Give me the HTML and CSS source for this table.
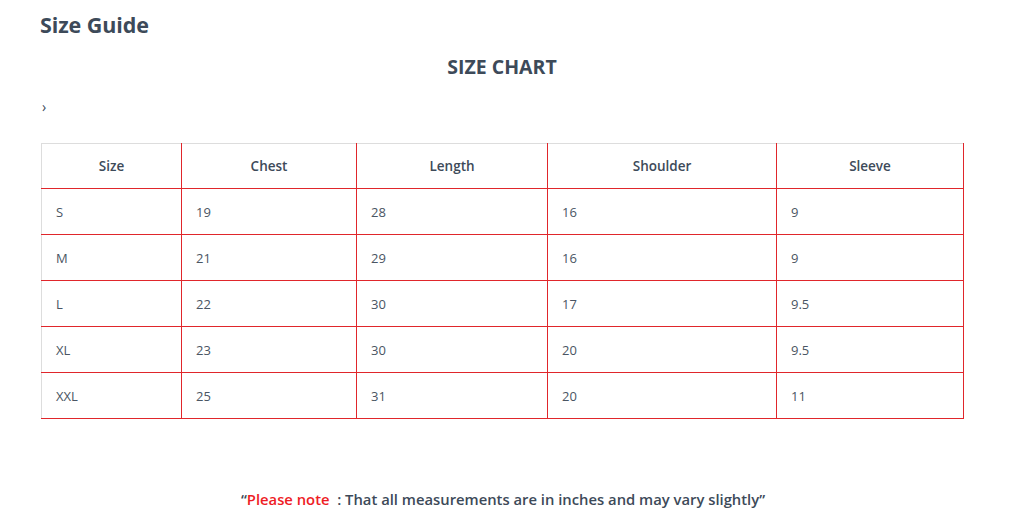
FILE: index.html
```html
<!DOCTYPE html>
<html>
<head>
<meta charset="utf-8">
<link rel="stylesheet" href="styles.css">
</head>
<body>
<div class="page">
  <h1 class="guide-title">Size Guide</h1>
  <h2 class="chart-title">SIZE CHART</h2>
  <div class="crumb">›</div>
  <table class="chart">
    <colgroup>
      <col class="c1"><col class="c2"><col class="c3"><col class="c4"><col class="c5">
    </colgroup>
    <thead>
      <tr><th>Size</th><th>Chest</th><th>Length</th><th>Shoulder</th><th>Sleeve</th></tr>
    </thead>
    <tbody>
      <tr><td>S</td><td>19</td><td>28</td><td>16</td><td>9</td></tr>
      <tr><td>M</td><td>21</td><td>29</td><td>16</td><td>9</td></tr>
      <tr><td>L</td><td>22</td><td>30</td><td>17</td><td>9.5</td></tr>
      <tr><td>XL</td><td>23</td><td>30</td><td>20</td><td>9.5</td></tr>
      <tr><td>XXL</td><td>25</td><td>31</td><td>20</td><td>11</td></tr>
    </tbody>
  </table>
  <p class="note">“<span class="red">Please note</span> &nbsp;: That all measurements are in inches and may vary slightly”</p>
</div>
</body>
</html>
```

FILE: styles.css
```css
html, body {
  margin: 0;
  padding: 0;
  background: #ffffff;
}
body {
  font-family: "Open Sans", "Liberation Sans", sans-serif;
  color: #3d4a59;
}
.page {
  width: 922px;
  padding: 0 0 0 41px;
}
.guide-title {
  margin: 0;
  padding-top: 10px;
  height: 30px;
  font-size: 21.5px;
  font-weight: 700;
  line-height: 30px;
  margin-left: -1px;
  letter-spacing: -0.1px;
}
.chart-title {
  margin: 0;
  padding-top: 13px;
  text-align: center;
  font-size: 19.5px;
  font-weight: 700;
  line-height: 28px;
  height: 28px;
}
.crumb {
  margin-top: 16px;
  height: 20px;
  font-size: 14px;
  line-height: 20px;
  padding-left: 1px;
}
.chart {
  margin-top: 26px;
  width: 922px;
  border-collapse: collapse;
  table-layout: fixed;
  font-size: 13px;
}
.c1 { width: 140px; }
.c2 { width: 175px; }
.c3 { width: 191px; }
.c4 { width: 229px; }
.c5 { width: 187px; }
.chart th, .chart td {
  border: 1px solid #e0262b;
  height: 46px;
  padding: 0 0 0 14px;
  box-sizing: border-box;
}
.chart th {
  height: 45px;
  text-align: center;
  padding: 0;
  font-weight: 600;
  font-size: 13.5px;
  border-top-color: #dddddd;
}
.chart th:first-child, .chart td:first-child {
  border-left-color: #dddddd;
}
.chart td {
  font-weight: 400;
  color: #4a5563;
}
.note {
  margin: 70px 0 0 0;
  text-align: center;
  font-size: 14.8px;
  font-weight: 600;
  line-height: 20px;
  padding-left: 2px;
}
.red {
  color: #ee1c25;
}
```
